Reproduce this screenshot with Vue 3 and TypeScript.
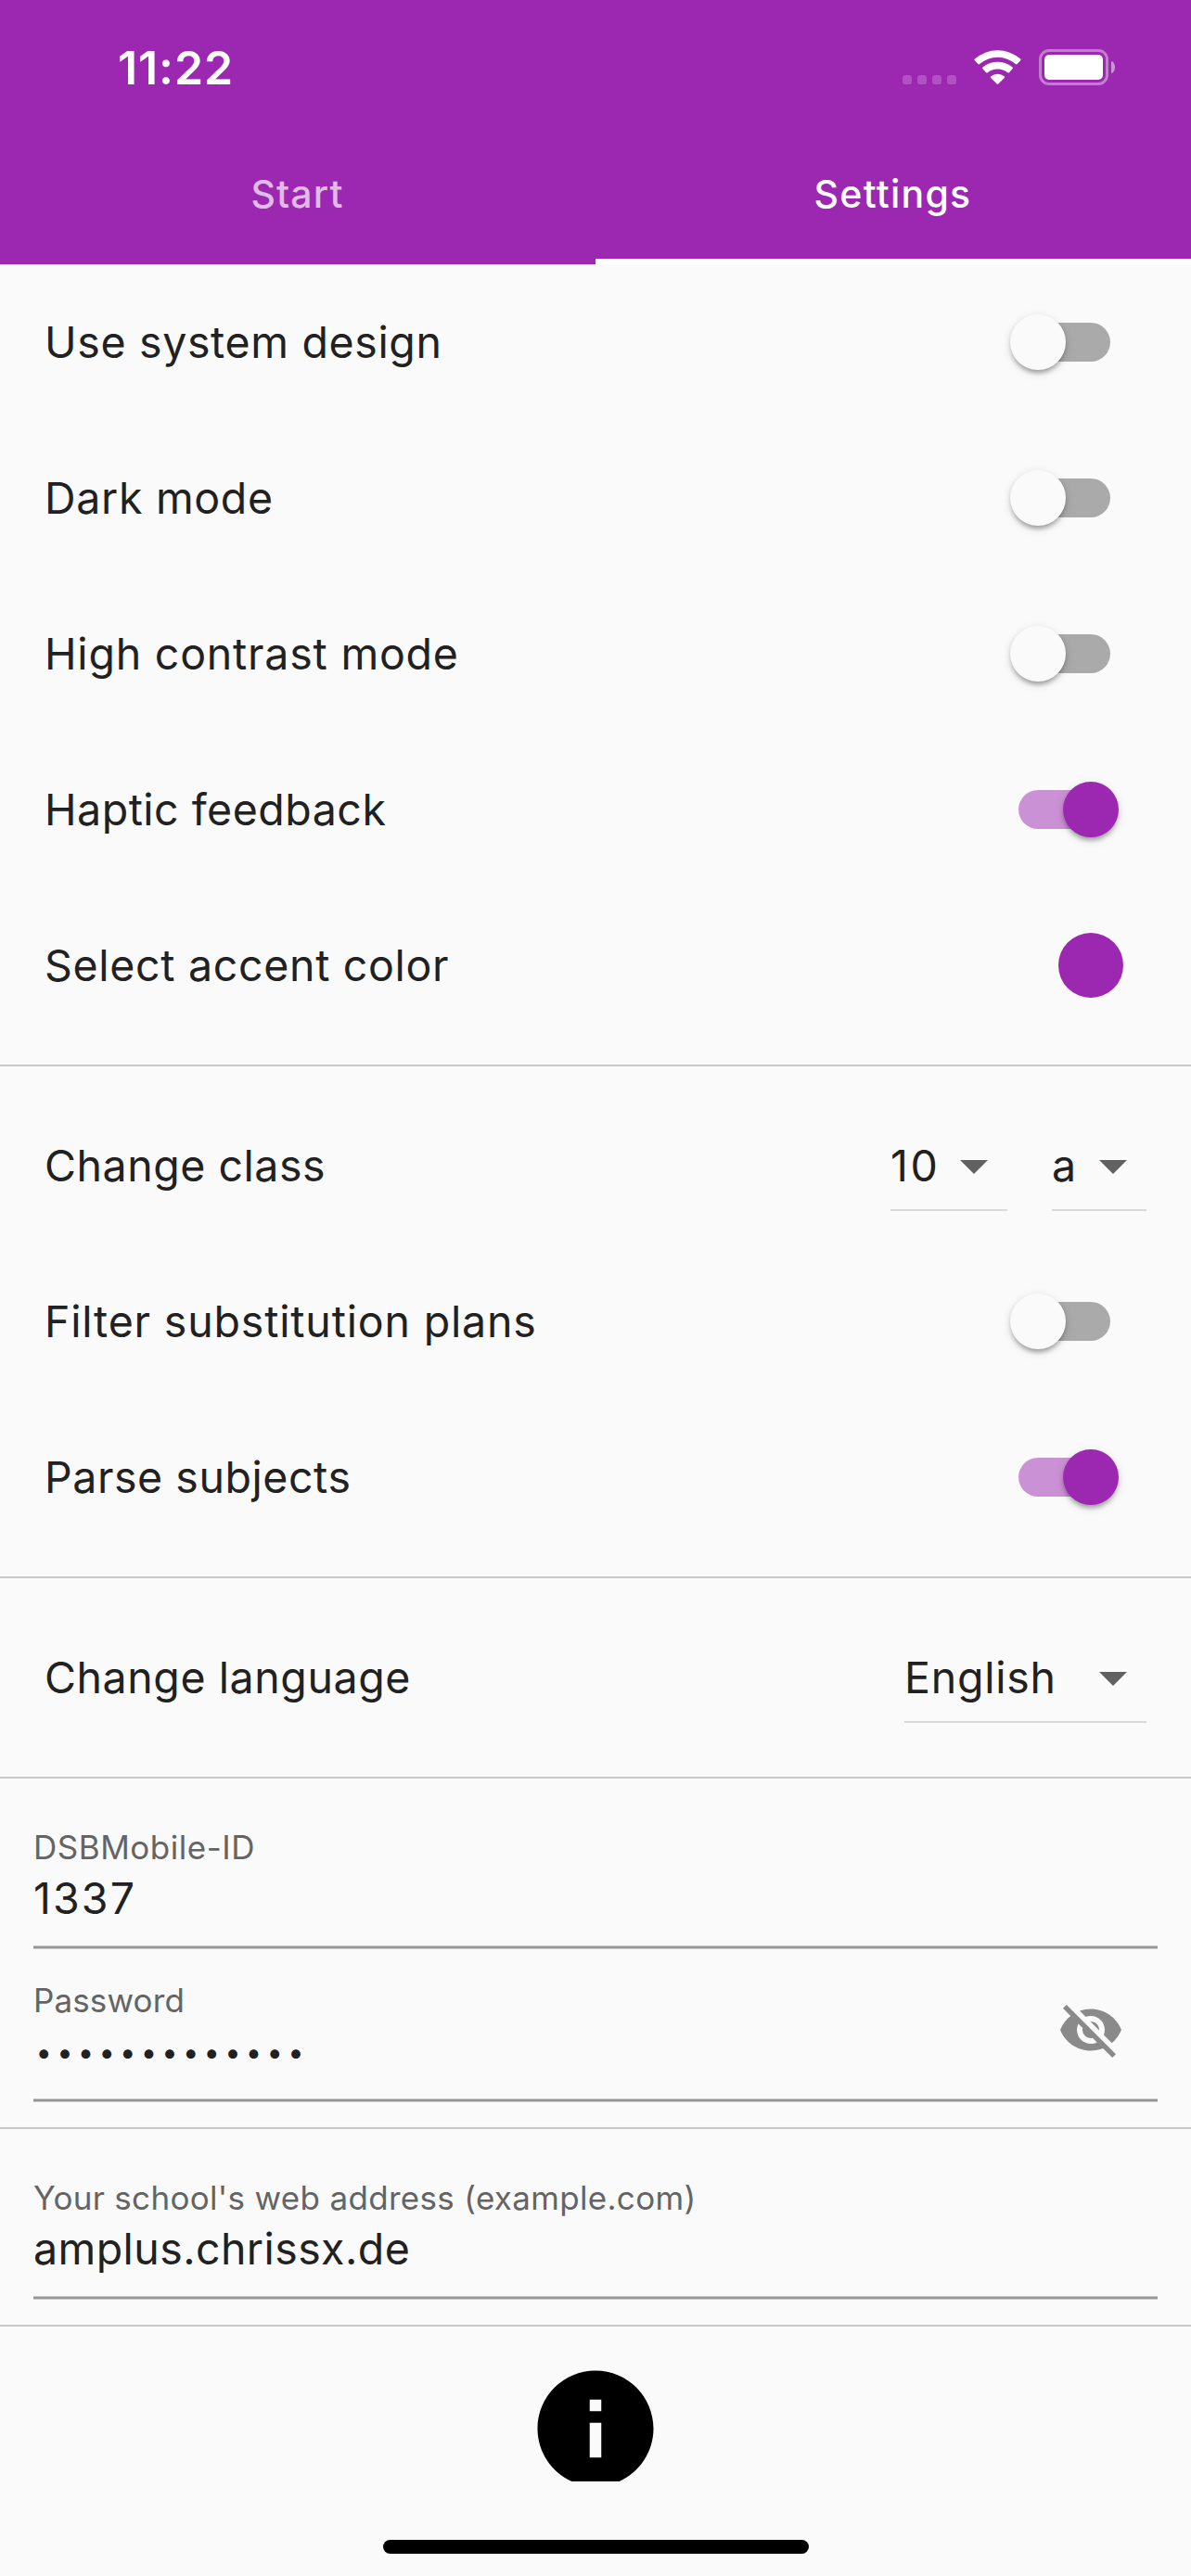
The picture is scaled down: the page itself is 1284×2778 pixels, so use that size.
<script setup lang="ts">
import { ref } from 'vue'

interface Choice {
  value: string
  width: number
  tracking: number
}

interface Row {
  label: string
  tracking: number
  kind: 'switch' | 'color' | 'select'
  on?: boolean
  choices?: Choice[]
}

interface Field {
  label: string
  labelTracking: number
  value: string
  tracking: number
  secret?: boolean
}

const tabs = [
  { name: 'Start', tracking: 1.1 },
  { name: 'Settings', tracking: 1.25 },
]
const activeTab = ref('Settings')

const groups = ref<Row[][]>([
  [
    { label: 'Use system design', tracking: 0.65, kind: 'switch', on: false },
    { label: 'Dark mode', tracking: 0.68, kind: 'switch', on: false },
    { label: 'High contrast mode', tracking: 0.78, kind: 'switch', on: false },
    { label: 'Haptic feedback', tracking: 0.5, kind: 'switch', on: true },
    { label: 'Select accent color', tracking: 0.68, kind: 'color' },
  ],
  [
    {
      label: 'Change class',
      tracking: 0.52,
      kind: 'select',
      choices: [
        { value: '10', width: 126, tracking: 2.6 },
        { value: 'a', width: 102, tracking: 0 },
      ],
    },
    { label: 'Filter substitution plans', tracking: 0.82, kind: 'switch', on: false },
    { label: 'Parse subjects', tracking: 0.55, kind: 'switch', on: true },
  ],
  [
    {
      label: 'Change language',
      tracking: 0.57,
      kind: 'select',
      choices: [{ value: 'English', width: 261, tracking: 0.75 }],
    },
  ],
])

const accountFields: Field[] = [
  { label: 'DSBMobile-ID', labelTracking: 0.52, value: '1337', tracking: 2.1 },
  { label: 'Password', labelTracking: 0.12, value: '•'.repeat(13), tracking: 5.2, secret: true },
]
const schoolFields: Field[] = [
  {
    label: "Your school's web address (example.com)",
    labelTracking: 0.31,
    value: 'amplus.chrissx.de',
    tracking: 0.42,
  },
]
const fieldGroups = [accountFields, schoolFields]

function spacing(px: number) {
  return { letterSpacing: `${px}px` }
}
</script>

<template>
  <div class="screen">
    <header class="app-bar">
      <div class="status">
        <span class="time">11:22</span>
        <div class="indicators">
          <div class="cellular"><i v-for="n in 4" :key="n"></i></div>
          <svg class="wifi" width="51" height="37" viewBox="0 0 51 37" fill="#fff">
            <path d="M.9 9.6A37 37 0 0 1 50.1 9.6Q50.9 10.4 50.2 11.2L46.6 15.1Q45.8 15.8 45 15.1A29.5 29.5 0 0 0 6 15.1Q5.2 15.8 4.4 15.1L.8 11.2Q.1 10.4 .9 9.6Z" />
            <path d="M9.4 18.5A25.5 25.5 0 0 1 41.6 18.5Q42.5 19.3 41.7 20.1L37.9 24.2Q37.1 24.9 36.2 24.2A17.5 17.5 0 0 0 14.8 24.2Q13.9 24.9 13.1 24.2L9.3 20.1Q8.5 19.3 9.4 18.5Z" />
            <path d="M18.3 28.3A11.3 11.3 0 0 1 32.7 28.3Q33.6 29.1 32.8 29.9L26.3 36.5Q25.5 37.2 24.7 36.5L18.2 29.9Q17.4 29.1 18.3 28.3Z" />
          </svg>
          <div class="battery">
            <div class="cell"><div class="charge"></div></div>
            <div class="nub"></div>
          </div>
        </div>
      </div>
      <nav class="tabs">
        <button
          v-for="tab in tabs"
          :key="tab.name"
          class="tab"
          :class="{ active: tab.name === activeTab }"
          :style="spacing(tab.tracking)"
          @click="activeTab = tab.name"
        >
          {{ tab.name }}
        </button>
      </nav>
    </header>

    <main class="content">
      <template v-for="(group, g) in groups" :key="g">
        <section>
          <div v-for="row in group" :key="row.label" class="row">
            <span class="label" :style="spacing(row.tracking)">{{ row.label }}</span>
            <div
              v-if="row.kind === 'switch'"
              class="switch"
              :class="{ on: row.on }"
              @click="row.on = !row.on"
            >
              <div class="thumb"></div>
            </div>
            <div v-else-if="row.kind === 'color'" class="swatch"></div>
            <div v-else class="selects">
              <div
                v-for="choice in row.choices"
                :key="choice.value"
                class="select"
                :style="{ width: `${choice.width}px` }"
              >
                <span :style="spacing(choice.tracking)">{{ choice.value }}</span>
                <svg width="72" height="72" viewBox="0 0 24 24" fill="#616161">
                  <path d="M7 10l5 5 5-5z" />
                </svg>
              </div>
            </div>
          </div>
        </section>
        <hr class="divider" />
      </template>

      <template v-for="(fields, f) in fieldGroups" :key="f">
        <section>
          <div v-for="field in fields" :key="field.label" class="field">
            <div class="caption" :style="spacing(field.labelTracking)">{{ field.label }}</div>
            <div class="value" :class="{ secret: field.secret }" :style="spacing(field.tracking)">
              {{ field.value }}
            </div>
            <div class="underline"></div>
            <svg v-if="field.secret" class="eye" width="72" height="72" viewBox="0 0 24 24" fill="#8a8a8a">
              <path d="M12 7c2.76 0 5 2.24 5 5 0 .65-.13 1.26-.36 1.83l2.92 2.92c1.51-1.26 2.7-2.89 3.43-4.75-1.73-4.39-6-7.5-11-7.5-1.4 0-2.74.25-3.98.7l2.16 2.16C10.74 7.13 11.35 7 12 7zM2 4.27l2.28 2.28.46.46C3.08 8.3 1.78 10.02 1 12c1.73 4.39 6 7.5 11 7.5 1.55 0 3.03-.3 4.38-.84l.42.42L19.73 22 21 20.73 3.27 3 2 4.27zM7.53 9.8l1.55 1.55c-.05.21-.08.43-.08.65 0 1.66 1.34 3 3 3 .22 0 .44-.03.65-.08l1.55 1.55c-.67.33-1.41.53-2.2.53-2.76 0-5-2.24-5-5 0-.79.2-1.53.53-2.2zm4.31-.78l3.15 3.15.02-.16c0-1.66-1.34-3-3-3l-.17.01z" />
            </svg>
          </div>
        </section>
        <hr class="divider" />
      </template>

      <div class="about">
        <svg width="150" height="150" viewBox="0 0 24 24" fill="#000">
          <path d="M12 2C6.48 2 2 6.48 2 12s4.48 10 10 10 10-4.48 10-10S17.52 2 12 2zm1 15h-2v-6h2v6zm0-8h-2V7h2v2z" />
        </svg>
      </div>
    </main>

    <footer class="home"><div class="home-bar"></div></footer>
  </div>
</template>

<style>
body {
  margin: 0;
  background: #fafafa;
}
</style>

<style scoped>
.screen {
  width: 1284px;
  height: 2778px;
  display: flex;
  flex-direction: column;
  overflow: hidden;
  background: #fafafa;
  color: #212121;
  font-family: Inter, Roboto, sans-serif;
  font-size: 46.5px;
}

.app-bar {
  flex: none;
  height: 285px;
  background: #9c27b0;
  color: #fff;
}

.status {
  height: 141px;
  box-sizing: border-box;
  padding: 0 82px 0 127px;
  display: flex;
  justify-content: space-between;
}

.time {
  font-size: 50px;
  font-weight: 600;
  line-height: 146px;
  letter-spacing: 0.9px;
}

.indicators {
  display: flex;
  align-items: flex-start;
}

.cellular {
  display: flex;
  gap: 6px;
  margin: 81px 19px 0 0;
}

.cellular i {
  width: 10px;
  height: 10px;
  border-radius: 3px;
  background: rgba(255, 255, 255, 0.2);
}

.wifi {
  margin: 54px 19px 0 0;
}

.battery {
  display: flex;
  align-items: center;
  gap: 3px;
  margin-top: 53px;
}

.cell {
  box-sizing: border-box;
  width: 75px;
  height: 39px;
  padding: 3px;
  border: 3px solid rgba(255, 255, 255, 0.4);
  border-radius: 11px;
}

.charge {
  height: 100%;
  border-radius: 5px;
  background: #fff;
}

.nub {
  width: 4px;
  height: 13px;
  border-radius: 0 4px 4px 0 / 0 6.5px 6.5px 0;
  background: rgba(255, 255, 255, 0.5);
}

.tabs {
  display: flex;
  height: 144px;
}

.tab {
  flex: none;
  width: 642px;
  height: 144px;
  box-sizing: border-box;
  margin: 0;
  padding: 0 1px 3px 0;
  border: 0;
  border-bottom: 6px solid transparent;
  background: none;
  color: rgba(255, 255, 255, 0.7);
  font-family: inherit;
  font-size: 41px;
  font-weight: 500;
  line-height: 132px;
}

.tab.active {
  color: #fff;
  border-bottom-color: #fff;
}

.content {
  flex: 1;
  min-height: 0;
  overflow: hidden;
}

.row {
  display: flex;
  align-items: center;
  justify-content: space-between;
  height: 168px;
  padding: 0 48px;
}

.label {
  white-space: nowrap;
}

.switch {
  width: 99px;
  height: 42px;
  margin-right: 39px;
  border-radius: 21px;
  background: #aaa;
  display: flex;
  align-items: center;
}

.switch.on {
  background: #cb91d5;
  justify-content: flex-end;
}

.thumb {
  flex: none;
  width: 60px;
  height: 60px;
  margin: 0 -9px;
  border-radius: 50%;
  background: #fafafa;
  box-shadow:
    0 6px 5px -3px rgba(0, 0, 0, 0.2),
    0 3px 5px rgba(0, 0, 0, 0.14),
    0 3px 11px rgba(0, 0, 0, 0.12);
}

.switch.on .thumb {
  background: #9c27b0;
}

.swatch {
  width: 70px;
  height: 70px;
  margin-right: 25px;
  border-radius: 50%;
  background: #9c27b0;
}

.selects {
  display: flex;
  gap: 48px;
}

.select {
  display: flex;
  align-items: center;
  justify-content: space-between;
  box-sizing: border-box;
  height: 98px;
  padding: 2px 0 0;
  border-bottom: 2px solid #dadada;
}

.select svg {
  flex: none;
}

.divider {
  height: 2px;
  margin: 23px 0;
  border: 0;
  background: #c8c8c8;
}

.field {
  position: relative;
  box-sizing: border-box;
  height: 165px;
  padding: 30px 36px 0;
}

.caption {
  color: #646464;
  font-size: 35px;
  line-height: 42px;
}

.value {
  height: 56px;
  margin-top: 6px;
  line-height: 56px;
}

.value.secret {
  padding-left: 2.5px;
  font-size: 31px;
  line-height: 58px;
}

.underline {
  height: 2px;
  margin-top: 23px;
  border: solid #c8c8c8;
  border-width: 1px 0;
  background: #969696;
}

/* The visibility toggle floats over the right end of the password input. */
.eye {
  position: absolute;
  top: 47px;
  right: 72px;
}

.about {
  display: flex;
  justify-content: center;
  padding-top: 12px;
}

.home {
  flex: none;
  height: 102px;
  box-sizing: border-box;
  padding-top: 63px;
  display: flex;
  justify-content: center;
}

.home-bar {
  width: 459px;
  height: 15px;
  border-radius: 7.5px;
  background: #000;
}
</style>
